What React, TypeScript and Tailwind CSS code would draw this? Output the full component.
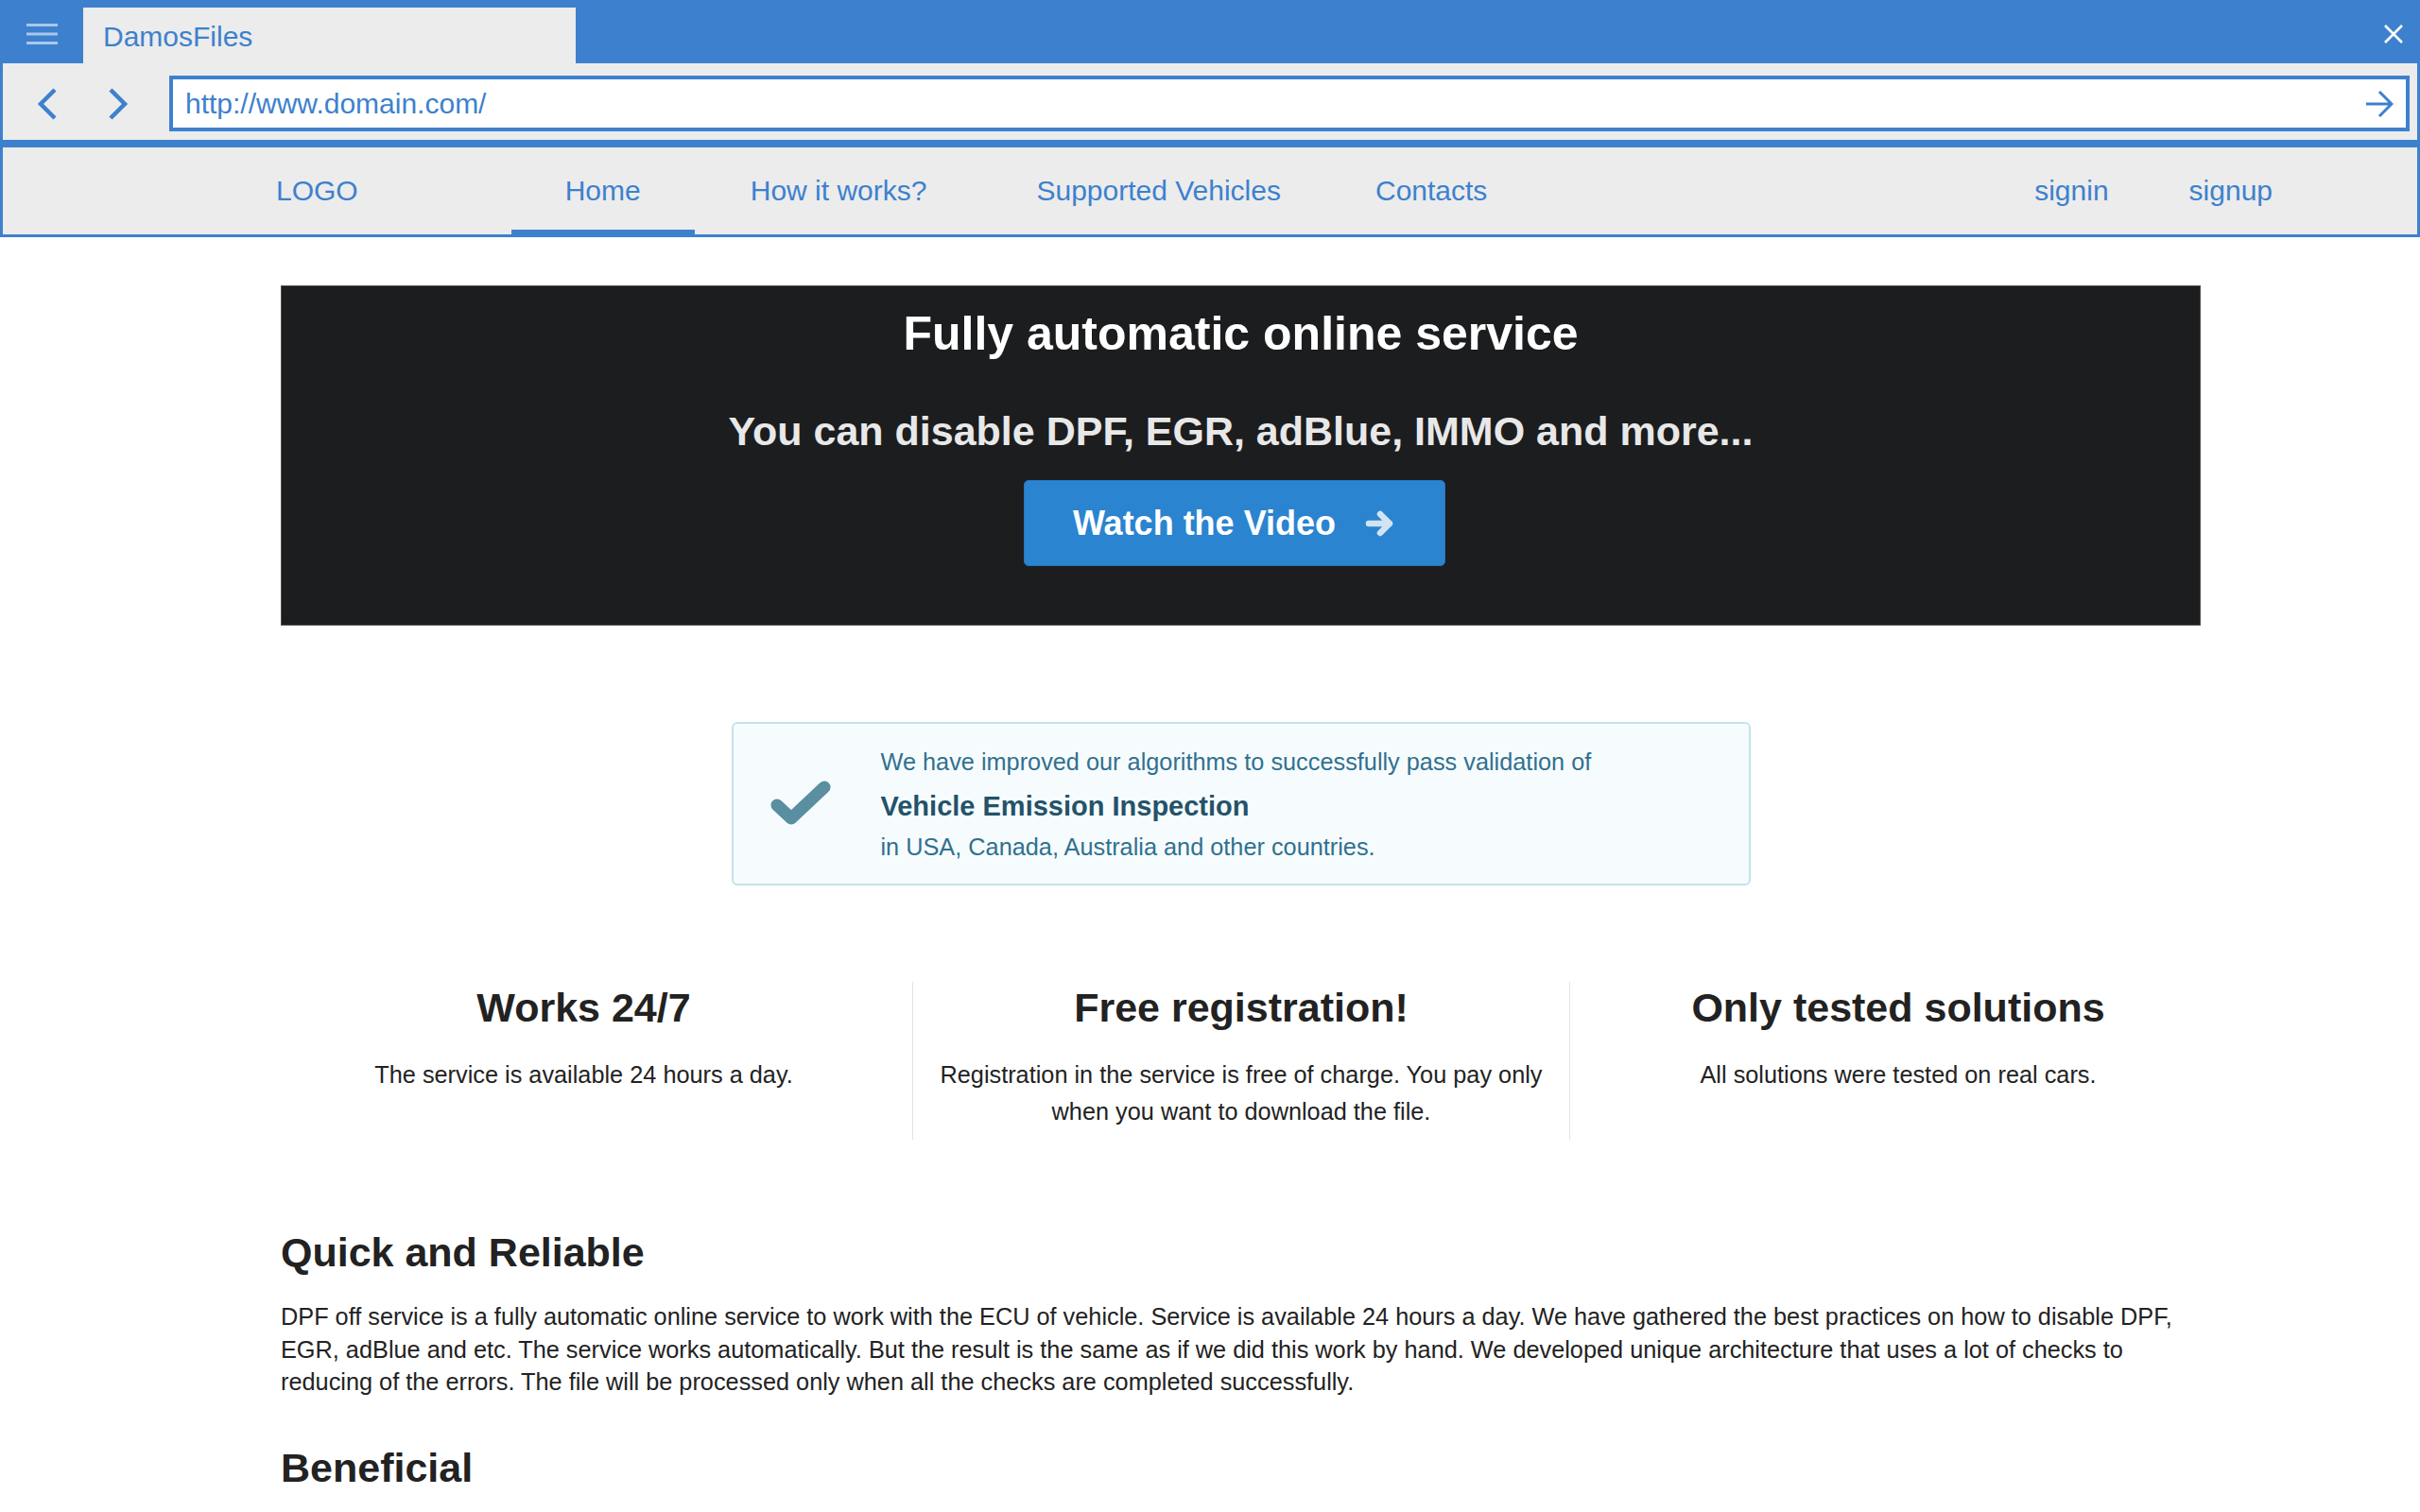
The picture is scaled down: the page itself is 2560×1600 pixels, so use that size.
import React from 'react';

const navLinks = [
  { label: 'How it works?', cls: 'ml-[59px]' },
  { label: 'Supported Vehicles', cls: 'ml-[116px]' },
  { label: 'Contacts', cls: 'ml-[100px]' },
];

const features = [
  {
    title: 'Works 24/7',
    text: 'The service is available 24 hours a day.',
  },
  {
    title: 'Free registration!',
    text: 'Registration in the service is free of charge. You pay only when you want to download the file.',
  },
  {
    title: 'Only tested solutions',
    text: 'All solutions were tested on real cars.',
  },
];

const BrowserChrome = () => {
  return (
    <div className="w-full">
      {/* title bar */}
      <div className="flex h-[67px] items-end bg-[#3d81ce]">
        <div className="flex h-full w-[88px] items-center justify-center pt-[5px]">
          <svg width="33" height="22" viewBox="0 0 33 22">
            <rect x="0" y="0" width="33" height="3" fill="#a9c7ec" />
            <rect x="0" y="9.5" width="33" height="3" fill="#a9c7ec" />
            <rect x="0" y="19" width="33" height="3" fill="#a9c7ec" />
          </svg>
        </div>
        <div className="flex h-[59px] w-[521px] items-center bg-[#ececec] pl-[21px] pt-[2px] text-[30px] text-[#3d81ce]">
          DamosFiles
        </div>
        <div className="ml-auto mr-[17px] self-center pt-[5px]">
          <svg width="22" height="22" viewBox="0 0 22 22">
            <path d="M2 2 L20 20 M20 2 L2 20" stroke="#ffffff" strokeWidth="2.6" />
          </svg>
        </div>
      </div>

      {/* address row */}
      <div className="flex h-[81px] items-center border-x-[3px] border-[#3d81ce] bg-[#ececec] pt-[4px]">
        <svg className="ml-[35px]" width="24" height="36" viewBox="0 0 24 36">
          <path d="M20 3 L5 18 L20 33" stroke="#3d81ce" strokeWidth="4.5" fill="none" />
        </svg>
        <svg className="ml-[51px]" width="24" height="36" viewBox="0 0 24 36">
          <path d="M4 3 L19 18 L4 33" stroke="#3d81ce" strokeWidth="4.5" fill="none" />
        </svg>
        <div className="ml-[42px] mr-[8px] flex h-[59px] flex-1 items-center border-[4px] border-[#3d81ce] bg-white pl-[13px] pr-[13px]">
          <span className="text-[30px] leading-none text-[#3d81ce]">http://www.domain.com/</span>
          <svg className="ml-auto" width="30" height="30" viewBox="0 0 30 30">
            <path d="M1 15 H28 M15 2 L28 15 L15 28" stroke="#3d81ce" strokeWidth="3" fill="none" />
          </svg>
        </div>
      </div>
      <div className="h-[8px] bg-[#3d81ce]" />

      {/* site navigation */}
      <div className="flex h-[95px] items-stretch border-x-[3px] border-b-[3px] border-[#3d81ce] bg-[#ececec] text-[30px] text-[#3d81ce]">
        <span className="ml-[289px] self-center leading-[36px]">LOGO</span>
        <span className="ml-[162px] flex items-center border-y-[5px] border-t-transparent border-b-[#3d81ce] px-[57px] leading-[36px]">
          Home
        </span>
        {navLinks.map((link) => (
          <span key={link.label} className={`${link.cls} self-center leading-[36px]`}>
            {link.label}
          </span>
        ))}
        <span className="ml-auto self-center leading-[36px]">signin</span>
        <span className="ml-[85px] mr-[153px] self-center leading-[36px]">signup</span>
      </div>
    </div>
  );
};

const App = () => {
  return (
    <div className="h-[1600px] w-full overflow-hidden bg-white font-['Liberation_Sans',Arial,sans-serif]">
      <BrowserChrome />

      <div className="ml-[297px] w-[2031px]">
        {/* hero */}
        <div className="mt-[51px] flex h-[360px] flex-col items-center border border-[#4d4d4d] bg-[#1c1d1f] pt-[20px]">
          <h1 className="text-[50px] font-bold leading-[60px] text-white">Fully automatic online service</h1>
          <p className="mt-[47px] text-[43px] font-bold leading-[52px] text-[#e8e8e8]">
            You can disable DPF, EGR, adBlue, IMMO and more...
          </p>
          <button className="mr-[14px] mt-[26px] flex h-[91px] w-[446px] items-center justify-center gap-[31px] rounded-[5px] border border-[#2676bd] bg-[#2a84cf] text-[36px] font-bold text-white">
            Watch the Video
            <svg width="32" height="30" viewBox="0 0 32 30">
              <path
                d="M4 15 H26 M16 5 L26 15 L16 25"
                stroke="#d2e4f4"
                strokeWidth="6.5"
                strokeLinecap="round"
                strokeLinejoin="round"
                fill="none"
              />
            </svg>
          </button>
        </div>

        {/* info alert */}
        <div className="mx-auto mt-[102px] flex h-[173px] w-[1078px] items-center rounded-[6px] border-2 border-[#c3e3ec] bg-[#f6fcfe]">
          <svg className="ml-[38px] shrink-0" width="66" height="52" viewBox="0 0 66 52">
            <path
              d="M8 27 L23 41 L58 8"
              stroke="#5a8ea1"
              strokeWidth="13"
              strokeLinecap="round"
              strokeLinejoin="round"
              fill="none"
            />
          </svg>
          <div className="ml-[52px] flex flex-col text-[25.3px] text-[#31708f]">
            <span className="leading-[36px]">We have improved our algorithms to successfully pass validation of</span>
            <span className="mt-[11px] text-[29px] font-bold leading-[36px] text-[#245269]">
              Vehicle Emission Inspection
            </span>
            <span className="mt-[7px] leading-[36px]">in USA, Canada, Australia and other countries.</span>
          </div>
        </div>

        {/* features */}
        <div className="-mx-[27px] mt-[102px] grid grid-cols-3">
          {features.map((f, i) => (
            <div
              key={f.title}
              className={
                i === 0
                  ? 'px-[24px] pb-[10px] pt-[2px] text-center'
                  : 'border-l border-[#e2e2e2] px-[24px] pb-[10px] pt-[2px] text-center'
              }
            >
              <h3 className="text-[43px] font-bold leading-[50px] text-[#222]">{f.title}</h3>
              <p className="mt-[27px] text-[25.3px] leading-[39px] text-[#222]">{f.text}</p>
            </div>
          ))}
        </div>

        {/* about */}
        <h2 className="mt-[93px] text-[43px] font-bold leading-[52px] text-[#222]">Quick and Reliable</h2>
        <p className="mt-[25px] w-full text-[25.3px] leading-[34.5px] text-[#222]">
          DPF off service is a fully automatic online service to work with the ECU of vehicle. Service is available 24
          hours a day. We have gathered the best practices on how to disable DPF, EGR, adBlue and etc. The service works
          automatically. But the result is the same as if we did this work by hand. We developed unique architecture
          that uses a lot of checks to reducing of the errors. The file will be processed only when all the checks are
          completed successfully.
        </p>
        <h2 className="mt-[47px] text-[43px] font-bold leading-[52px] text-[#222]">Beneficial</h2>
      </div>
    </div>
  );
};

export default App;
